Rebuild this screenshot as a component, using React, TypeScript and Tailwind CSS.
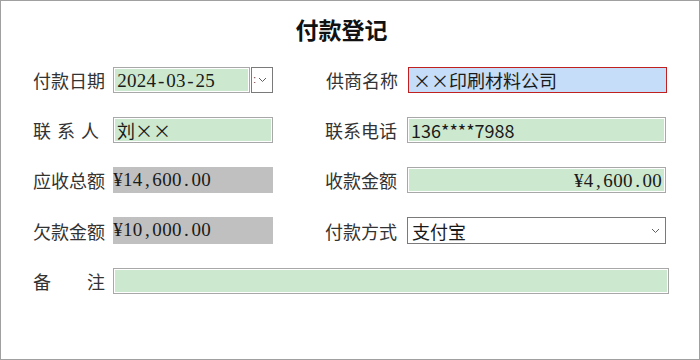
import React from 'react';

const cjk = "font-['Noto_Sans_CJK_SC',sans-serif]";
const serifNum = "font-['Liberation_Serif','Noto_Sans_CJK_SC',serif]";

// 半角等宽数字（模拟宋体）
const Mono: React.FC<{ text: string }> = ({ text }) => (
  <span className={`${serifNum} text-[19px] leading-none`}>
    {text.split('').map((c, i) => (
      <span key={i} className="inline-block w-[9.8px] text-center">
        {c}
      </span>
    ))}
  </span>
);

// 全角字符
const Wide: React.FC<{ text: string }> = ({ text }) => (
  <span className={`${cjk} text-[18px] leading-none`}>
    {text.split('').map((c, i) => (
      <span key={i} className="inline-block w-[18px] text-center">
        {c}
      </span>
    ))}
  </span>
);

const Label: React.FC<{ text: string; className?: string }> = ({ text, className }) => (
  <div className={`${cjk} text-[18px] leading-none text-[#333] flex items-center shrink-0 ${className ?? 'w-[72px]'}`}>
    {text.split('').map((c, i) => (
      <span key={i}>{c}</span>
    ))}
  </div>
);

const Chevron: React.FC<{ className?: string }> = ({ className }) => (
  <svg width="9" height="6" viewBox="0 0 9 6" className={className}>
    <path d="M1 1 L4.5 4.5 L8 1" fill="none" stroke="#606060" strokeWidth="1" />
  </svg>
);

const greenBox =
  'h-[26px] bg-[#cce8cf] border border-[#a8a8a8] shadow-[inset_0_0_0_1px_#ffffff] flex items-center px-[3px] text-[#1a1a1a]';

export default function App() {
  return (
    <div className="w-[700px] h-[360px] bg-white border border-[#a0a0a0] box-border">
      <h1 className={`${cjk} text-[23px] font-bold leading-[24px] text-[#111] text-center pr-[17px] mt-[16px]`}>
        付款登记
      </h1>

      <div className="pl-[32px] mt-[26px] flex flex-col gap-[24px]">
        {/* 第一行 */}
        <div className="flex items-center">
          <Label text="付款日期" />
          <div className="ml-[8px] flex w-[160px]">
            <div className={`${greenBox} w-[138px]`}>
              <Mono text="2024-03-25" />
            </div>
            <div className="h-[26px] w-[22px] ml-[1px] bg-white border border-[#7a7a7a] flex items-center pl-[1px]">
              <span className="text-[10px] leading-none text-[#333] font-['Liberation_Sans',sans-serif]">:</span>
              <Chevron className="ml-[2px]" />
            </div>
          </div>
          <Label text="供商名称" className="w-[74px] ml-[53px]" />
          <div className="ml-[8px] w-[259px] h-[26px] bg-[#c5ddf8] border border-[#c02020] flex items-center px-[4px] text-[#1a1a1a]">
            <Wide text="××" />
            <span className={`${cjk} text-[18px] leading-none`}>印刷材料公司</span>
          </div>
        </div>

        {/* 第二行 */}
        <div className="flex items-center">
          <Label text="联系人" className="w-[72px] gap-[6px]" />
          <div className={`${greenBox} ml-[8px] w-[160px]`}>
            <span className={`${cjk} text-[18px] leading-none`}>刘</span>
            <Wide text="××" />
          </div>
          <Label text="联系电话" className="w-[74px] ml-[52px]" />
          <div className={`${greenBox} ml-[8px] w-[259px]`}>
            <span className={`${cjk} text-[18px] leading-none`}>136****7988</span>
          </div>
        </div>

        {/* 第三行 */}
        <div className="flex items-center">
          <Label text="应收总额" />
          <div className="ml-[8px] w-[160px] h-[26px] bg-[#c0c0c0] flex items-start pt-[3px] text-[#1a1a1a]">
            <Mono text="¥14,600.00" />
          </div>
          <Label text="收款金额" className="w-[74px] ml-[52px]" />
          <div className={`${greenBox} ml-[8px] w-[259px] justify-end`}>
            <Mono text="¥4,600.00" />
          </div>
        </div>

        {/* 第四行 */}
        <div className="flex items-center">
          <Label text="欠款金额" />
          <div className="ml-[8px] w-[160px] h-[27px] bg-[#c0c0c0] flex items-start pt-[3px] text-[#1a1a1a]">
            <Mono text="¥10,000.00" />
          </div>
          <Label text="付款方式" className="w-[74px] ml-[52px]" />
          <div className="ml-[8px] w-[259px] h-[27px] bg-white border border-[#7a7a7a] flex items-center justify-between pl-[4px] pr-[5px] text-[#1a1a1a]">
            <span className={`${cjk} text-[18px] leading-none`}>支付宝</span>
            <Chevron />
          </div>
        </div>

        {/* 备注 */}
        <div className="flex items-center">
          <Label text="备注" className="w-[72px] justify-between" />
          <div className={`${greenBox} ml-[8px] w-[556px]`} />
        </div>
      </div>
    </div>
  );
}
